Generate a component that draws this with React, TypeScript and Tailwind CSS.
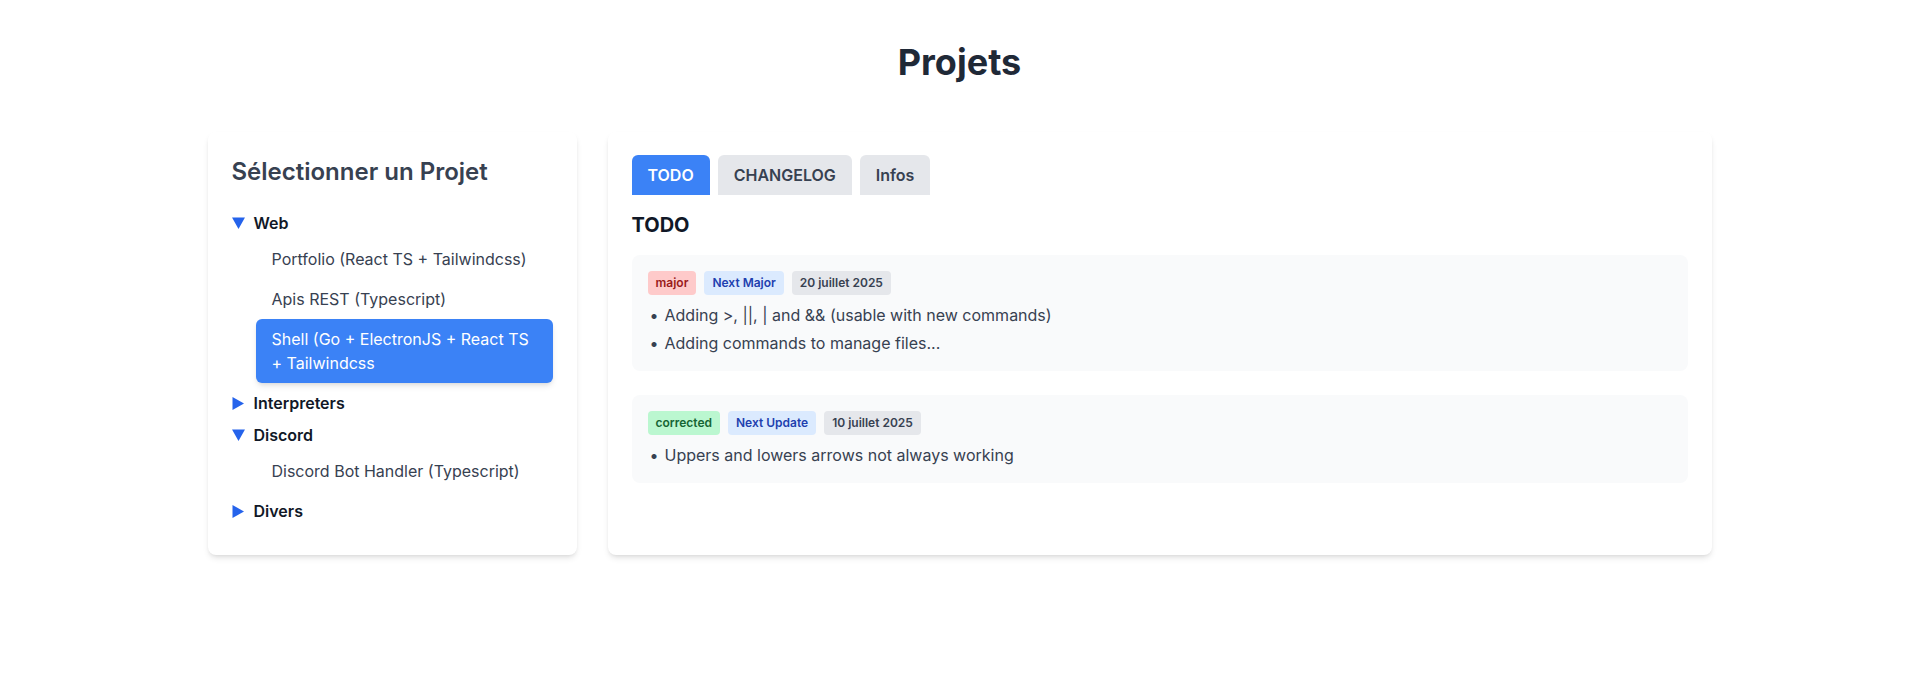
import { useState } from "react";

type Project = { name: string };
type Category = { name: string; open: boolean; projects: Project[] };

type Entry = {
  type: string;
  version: string;
  date: string;
  items: string[];
};

const CATEGORIES: Category[] = [
  {
    name: "Web",
    open: true,
    projects: [
      { name: "Portfolio (React TS + Tailwindcss)" },
      { name: "Apis REST (Typescript)" },
      { name: "Shell (Go + ElectronJS + React TS + Tailwindcss" },
    ],
  },
  { name: "Interpreters", open: false, projects: [] },
  {
    name: "Discord",
    open: true,
    projects: [{ name: "Discord Bot Handler (Typescript)" }],
  },
  { name: "Divers", open: false, projects: [] },
];

const TODOS: Entry[] = [
  {
    type: "major",
    version: "Next Major",
    date: "20 juillet 2025",
    items: [
      "Adding >, ||, | and && (usable with new commands)",
      "Adding commands to manage files...",
    ],
  },
  {
    type: "corrected",
    version: "Next Update",
    date: "10 juillet 2025",
    items: ["Uppers and lowers arrows not always working"],
  },
];

const TABS = ["TODO", "CHANGELOG", "Infos"];

function Triangle({ open }: { open: boolean }) {
  return open ? (
    <svg width="13" height="12" viewBox="0 0 13 12" className="text-[#2563eb] shrink-0">
      <path d="M0 0.5 H13 L6.5 12 Z" fill="currentColor" />
    </svg>
  ) : (
    <svg width="13" height="13" viewBox="0 0 13 13" className="text-[#2563eb] shrink-0">
      <path d="M0.5 0 L12 6.5 L0.5 13 Z" fill="currentColor" />
    </svg>
  );
}

function typeBadge(type: string) {
  if (type === "major") return "bg-[#fecaca] text-[#991b1b]";
  if (type === "corrected") return "bg-[#bbf7d0] text-[#166534]";
  return "bg-[#e5e7eb] text-[#374151]";
}

export default function App() {
  const [selected, setSelected] = useState("Shell (Go + ElectronJS + React TS + Tailwindcss");
  const [tab, setTab] = useState("TODO");

  return (
    <div className="min-h-screen bg-white font-['Inter','Noto_Sans',sans-serif] pt-[42px] pb-10">
      <h1 className="text-4xl font-bold text-[#1f2937] text-center mb-[50px]">Projets</h1>

      <div className="w-[1504px] mx-auto flex gap-[31px]">
        {/* Sidebar */}
        <div className="w-[369px] shrink-0 bg-white rounded-lg shadow-md p-6">
          <h2 className="text-2xl font-semibold text-[#374151] mb-[23px]">Sélectionner un Projet</h2>
          <div>
            {CATEGORIES.map((cat) => (
              <div key={cat.name} className="mb-2">
                <div className="flex items-center gap-[9px] h-6">
                  <Triangle open={cat.open} />
                  <span className="text-base font-semibold text-[#111827]">{cat.name}</span>
                </div>
                {cat.open && (
                  <ul className="ml-6 mt-1">
                    {cat.projects.map((p) => {
                      const active = p.name === selected;
                      return (
                        <li
                          key={p.name}
                          onClick={() => setSelected(p.name)}
                          className={
                            active
                              ? "px-4 py-2 rounded-md bg-[#3b82f6] text-white shadow-md cursor-pointer"
                              : "px-4 py-2 rounded-md text-[#374151] cursor-pointer"
                          }
                        >
                          {p.name}
                        </li>
                      );
                    })}
                  </ul>
                )}
              </div>
            ))}
          </div>
        </div>

        {/* Main panel */}
        <div className="flex-1 bg-white rounded-lg shadow-md px-6 pt-[23px] pb-6">
          <div className="flex gap-2 mb-4">
            {TABS.map((t) => (
              <button
                key={t}
                onClick={() => setTab(t)}
                className={
                  t === tab
                    ? "px-4 py-2 rounded-t-md bg-[#3b82f6] text-white font-semibold"
                    : "px-4 py-2 rounded-t-md bg-[#e5e7eb] text-[#374151] font-semibold"
                }
              >
                {t}
              </button>
            ))}
          </div>

          <h3 className="text-xl font-bold text-[#111827] mb-4">{tab}</h3>

          <div className="space-y-6">
            {TODOS.map((e) => (
              <div key={e.date} className="bg-[#f9fafb] rounded-lg p-4">
                <div className="flex gap-2">
                  <span className={`px-2 py-1 rounded text-xs font-semibold ${typeBadge(e.type)}`}>{e.type}</span>
                  <span className="px-2 py-1 rounded text-xs font-semibold bg-[#dbeafe] text-[#1e40af]">{e.version}</span>
                  <span className="px-2 py-1 rounded text-xs font-semibold bg-[#e5e7eb] text-[#374151]">{e.date}</span>
                </div>
                <ul className="mt-2 space-y-1 pl-[2px] text-[#374151]">
                  {e.items.map((it) => (
                    <li key={it} className="flex">
                      <span className="w-[15px] shrink-0">•</span>
                      <span>{it}</span>
                    </li>
                  ))}
                </ul>
              </div>
            ))}
          </div>
        </div>
      </div>
    </div>
  );
}
